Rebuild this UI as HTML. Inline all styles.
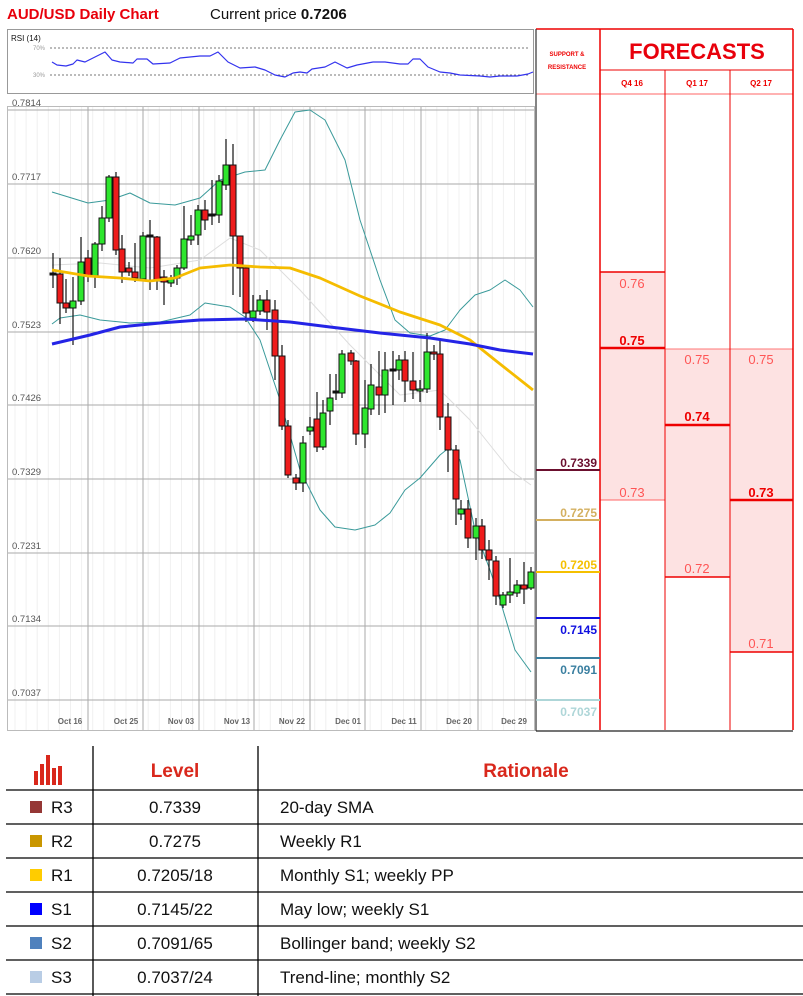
<!DOCTYPE html>
<html><head><meta charset="utf-8"><style>
body{margin:0;width:803px;height:996px;background:#fff;font-family:"Liberation Sans",sans-serif;overflow:hidden;position:relative}
.a{position:absolute}
</style></head><body>
<div class="a" style="left:7px;top:6px;font-size:15px;font-weight:bold;color:#e8000b">AUD/USD Daily Chart</div>
<div class="a" style="left:210px;top:6px;font-size:15px;color:#111">Current price <b>0.7206</b></div>
<svg id="s" class="a" style="left:0;top:0" width="803" height="740"></svg>
<svg class="a" style="left:0;top:740px" width="803" height="256">
<g stroke="#000" stroke-width="1.3">
<line x1="93" y1="6" x2="93" y2="256"/><line x1="258" y1="6" x2="258" y2="256"/>
<line x1="6" y1="50" x2="803" y2="50"/><line x1="6" y1="84" x2="803" y2="84"/><line x1="6" y1="118" x2="803" y2="118"/><line x1="6" y1="152" x2="803" y2="152"/><line x1="6" y1="186" x2="803" y2="186"/><line x1="6" y1="220" x2="803" y2="220"/><line x1="6" y1="254" x2="803" y2="254"/>
</g>
<g fill="#d9281c"><rect x="34" y="31" width="4" height="14"/><rect x="40" y="24" width="4" height="21"/><rect x="46" y="15" width="4" height="30"/><rect x="52" y="28" width="4" height="17"/><rect x="58" y="26" width="4" height="19"/></g>
<text x="175" y="37" font-size="19" font-weight="bold" fill="#d9281c" text-anchor="middle">Level</text>
<text x="526" y="37" font-size="19" font-weight="bold" fill="#d9281c" text-anchor="middle">Rationale</text>
<g font-size="17" fill="#111">
<rect x="30" y="61" width="12" height="12" fill="#953735"/><text x="51" y="73">R3</text><text x="175" y="73" text-anchor="middle">0.7339</text><text x="280" y="73">20-day SMA</text>
<rect x="30" y="95" width="12" height="12" fill="#c99600"/><text x="51" y="107">R2</text><text x="175" y="107" text-anchor="middle">0.7275</text><text x="280" y="107">Weekly R1</text>
<rect x="30" y="129" width="12" height="12" fill="#ffcc00"/><text x="51" y="141">R1</text><text x="175" y="141" text-anchor="middle">0.7205/18</text><text x="280" y="141">Monthly S1; weekly PP</text>
<rect x="30" y="163" width="12" height="12" fill="#0000ff"/><text x="51" y="175">S1</text><text x="175" y="175" text-anchor="middle">0.7145/22</text><text x="280" y="175">May low; weekly S1</text>
<rect x="30" y="197" width="12" height="12" fill="#4f81bd"/><text x="51" y="209">S2</text><text x="175" y="209" text-anchor="middle">0.7091/65</text><text x="280" y="209">Bollinger band; weekly S2</text>
<rect x="30" y="231" width="12" height="12" fill="#b9cde5"/><text x="51" y="243">S3</text><text x="175" y="243" text-anchor="middle">0.7037/24</text><text x="280" y="243">Trend-line; monthly S2</text>
</g>
</svg>
<script>
var s=document.getElementById('s'),h='';
function L(x1,y1,x2,y2,c,w,extra){h+='<line x1="'+x1+'" y1="'+y1+'" x2="'+x2+'" y2="'+y2+'" stroke="'+c+'" stroke-width="'+(w||1)+'" '+(extra||'')+'/>';}
function P(pts,c,w){h+='<polyline fill="none" stroke="'+c+'" stroke-width="'+w+'" stroke-linejoin="round" points="'+pts.join(' ')+'"/>';}
function T(x,y,t,sz,c,b,anc){h+='<text x="'+x+'" y="'+y+'" font-size="'+sz+'" fill="'+c+'" '+(b?'font-weight="bold" ':'')+(anc?'text-anchor="'+anc+'" ':'')+'>'+t+'</text>';}
h+='<rect x="7.5" y="29.5" width="526" height="64" fill="#fff" stroke="#999"/>';
T(11,41,'RSI (14)',8,'#111');
L(50,48,530,48,'#777',1,'stroke-dasharray="2,2"');L(50,75,530,75,'#777',1,'stroke-dasharray="2,2"');
T(33,50,'70%',6,'#999');T(33,77,'30%',6,'#999');
P(['52,62','57,65','66,66','73,64','77,60','85,62','105,52','112,60','120,62','133,63','137,59','147,59','153,64','170,63','180,58','190,57','200,56','210,56','218,52','228,62','240,68','255,67','265,70','275,75','285,77','293,73','300,72','307,73','312,69','325,67','335,62','347,68','357,65','373,62','385,62','400,64','408,64','413,59','420,59','428,67','440,72','450,73','460,75','480,76','490,77','500,76','517,76','528,74','533,72'],'#3333ee',1.2);
h+='<rect x="7.5" y="106.5" width="527" height="624" fill="#fff" stroke="#bbb"/>';
for(var x=15;x<534;x+=11.1)L(x,107,x,730,'#f0f0f0',1);
[88,143,199,254,310,365,421,478].forEach(function(x){L(x,107,x,730,'#aaa',1)});
var lv=[['0.7814',110],['0.7717',184],['0.7620',258],['0.7523',332],['0.7426',405],['0.7329',479],['0.7231',553],['0.7134',626],['0.7037',700]];
lv.forEach(function(v){L(8,v[1],534,v[1],'#aaa',1);T(12,v[1]-4,v[0],9.5,'#555')});
[['Oct 16',70],['Oct 25',126],['Nov 03',181],['Nov 13',237],['Nov 22',292],['Dec 01',348],['Dec 11',404],['Dec 20',459],['Dec 29',514]].forEach(function(d){T(d[1],724,d[0],8,'#666',1,'middle')});
P(['52,265','100,263','150,268','200,260','230,238','260,250','300,290','350,345','400,395','440,390','470,420','510,470','531,485'],'#ddd',1);
P(['52,192','88,203','110,200','130,193','150,203','175,205','200,198','220,180','245,172','265,170','280,140','295,112','310,110','325,120','345,160','360,220','380,280','395,320','410,333','430,336','445,330','460,310','475,295','490,290','505,280','520,290','533,307'],'#3a9a9a',1);
P(['52,324','60,318','80,315','100,320','130,323','160,322','190,315','205,303','230,307','245,317','260,340','280,400','300,470','320,510','335,527','355,530','375,525','390,513','405,490','420,478','440,455','450,447','460,460','475,530','490,570','500,600','515,650','531,672'],'#3a9a9a',1);
var C=[[53,273,275,253,288,'d'],[60,274,303,258,324,'r'],[66,303,308,279,313,'r'],[73,301,308,277,345,'g'],[81,262,301,237,305,'g'],[88,258,276,250,282,'r'],[95,244,276,242,288,'g'],[102,218,244,206,251,'g'],[109,177,218,175,222,'g'],[116,177,250,172,255,'r'],[122,249,272,235,283,'r'],[129,268,272,262,276,'r'],[135,272,278,243,282,'r'],[143,236,279,232,281,'g'],[150,235,237,220,290,'d'],[157,237,281,236,290,'r'],[164,277,282,270,305,'r'],[171,278,283,275,287,'g'],[177,268,278,265,285,'g'],[184,239,268,206,270,'g'],[191,236,240,215,245,'g'],[198,210,235,205,245,'g'],[205,210,220,200,230,'r'],[212,214,216,180,225,'d'],[219,181,215,175,223,'g'],[226,165,185,139,190,'g'],[233,165,236,144,295,'r'],[240,236,268,251,297,'r'],[246,268,313,265,322,'r'],[253,311,318,295,322,'g'],[260,300,311,295,315,'g'],[267,300,312,290,330,'r'],[275,310,356,300,380,'r'],[282,356,426,345,430,'r'],[288,426,475,420,478,'r'],[296,478,483,474,490,'r'],[303,443,483,436,492,'g'],[310,427,431,417,435,'g'],[317,419,447,392,452,'r'],[323,413,447,400,450,'g'],[330,398,411,374,425,'g'],[336,391,393,374,400,'d'],[342,354,393,350,398,'g'],[351,353,361,350,365,'r'],[356,361,434,360,445,'r'],[365,408,434,380,448,'g'],[371,385,409,364,415,'g'],[379,387,395,351,415,'r'],[385,370,395,352,413,'g'],[393,369,371,351,405,'d'],[399,360,370,355,380,'g'],[405,360,381,351,402,'r'],[413,381,390,352,399,'r'],[420,389,391,380,402,'g'],[427,352,389,333,393,'g'],[434,352,354,345,360,'r'],[440,354,417,340,430,'r'],[448,417,450,403,472,'r'],[456,450,499,445,525,'r'],[461,509,514,500,520,'g'],[468,509,538,500,548,'r'],[476,526,538,518,560,'g'],[482,526,550,519,559,'r'],[489,550,560,540,580,'r'],[496,561,596,556,605,'r'],[503,595,605,592,608,'g'],[510,592,595,558,603,'g'],[517,585,593,580,597,'g'],[524,585,589,562,604,'r'],[531,572,588,567,590,'g']];
C.forEach(function(c){L(c[0],c[3],c[0],c[4],'#111',1.2);var f=c[5]=='g'?'#2ee62e':c[5]=='r'?'#ee1c1c':'#111';h+='<rect x="'+(c[0]-3)+'" y="'+c[1]+'" width="6" height="'+Math.max(1.5,c[2]-c[1])+'" fill="'+f+'" stroke="#111" stroke-width="1"/>';});
P(['52,270','88,276','120,278','150,281','175,278','200,268','230,265','260,267','290,268','320,278','360,296','400,312','440,325','470,340','495,360','533,390'],'#f5bc00',2.8);
P(['52,344','90,335','120,327','160,323','200,320','245,319','290,322','330,327','380,333','430,338','470,344','500,350','533,354'],'#2424e6',3);
h+='<rect x="600" y="272" width="65" height="228" fill="#fde2e2" stroke="#f77"/><rect x="665" y="349" width="65" height="228" fill="#fde2e2" stroke="#f77"/><rect x="730" y="349" width="63" height="303" fill="#fde2e2" stroke="#f77"/>';
L(600,348,665,348,'#e00',2.5);L(665,425,730,425,'#e00',2.5);L(730,500,793,500,'#e00',2.5);
L(600,272,665,272,'#e00',1.5);L(600,500,665,500,'#f66',1);L(665,577,730,577,'#e00',1.5);L(730,652,793,652,'#e00',1.5);
T(632,288,'0.76',13,'#f55',0,'middle');T(632,345,'0.75',13,'#e00',1,'middle');T(632,497,'0.73',13,'#f55',0,'middle');
T(697,364,'0.75',13,'#f55',0,'middle');T(697,421,'0.74',13,'#e00',1,'middle');T(697,573,'0.72',13,'#f55',0,'middle');
T(761,364,'0.75',13,'#f55',0,'middle');T(761,497,'0.73',13,'#e00',1,'middle');T(761,648,'0.71',13,'#f55',0,'middle');
L(536,29,793,29,'#e00',1.5);L(600,70,793,70,'#e00',1);L(536,94,793,94,'#f66',1);
L(600,29,600,730,'#e00',1.5);L(665,70,665,730,'#e00',1);L(730,70,730,730,'#e00',1);L(793,29,793,730,'#e00',1.5);
L(536,29,536,731,'#333',1.2);L(536,731,793,731,'#222',1.2);
T(567,56,'SUPPORT &amp;',6,'#e00',1,'middle');T(567,69,'RESISTANCE',6,'#e00',1,'middle');
T(697,59,'FORECASTS',22,'#e8000b',1,'middle');
T(632,86,'Q4 16',8,'#e00',1,'middle');T(697,86,'Q1 17',8,'#e00',1,'middle');T(761,86,'Q2 17',8,'#e00',1,'middle');
L(536,470,600,470,'#6b0f2e',2);T(597,467,'0.7339',12,'#6b0f2e',1,'end');
L(536,520,600,520,'#d4b060',2);T(597,517,'0.7275',12,'#d4b060',1,'end');
L(536,572,600,572,'#f5c000',2);T(597,569,'0.7205',12,'#f5c000',1,'end');
L(536,618,600,618,'#1010e0',2);T(597,634,'0.7145',12,'#1010e0',1,'end');
L(536,658,600,658,'#3a7fa0',2);T(597,674,'0.7091',12,'#3a7fa0',1,'end');
L(536,700,600,700,'#aed6d8',2);T(597,716,'0.7037',12,'#aed6d8',1,'end');
s.innerHTML=h;
</script>
</body></html>
